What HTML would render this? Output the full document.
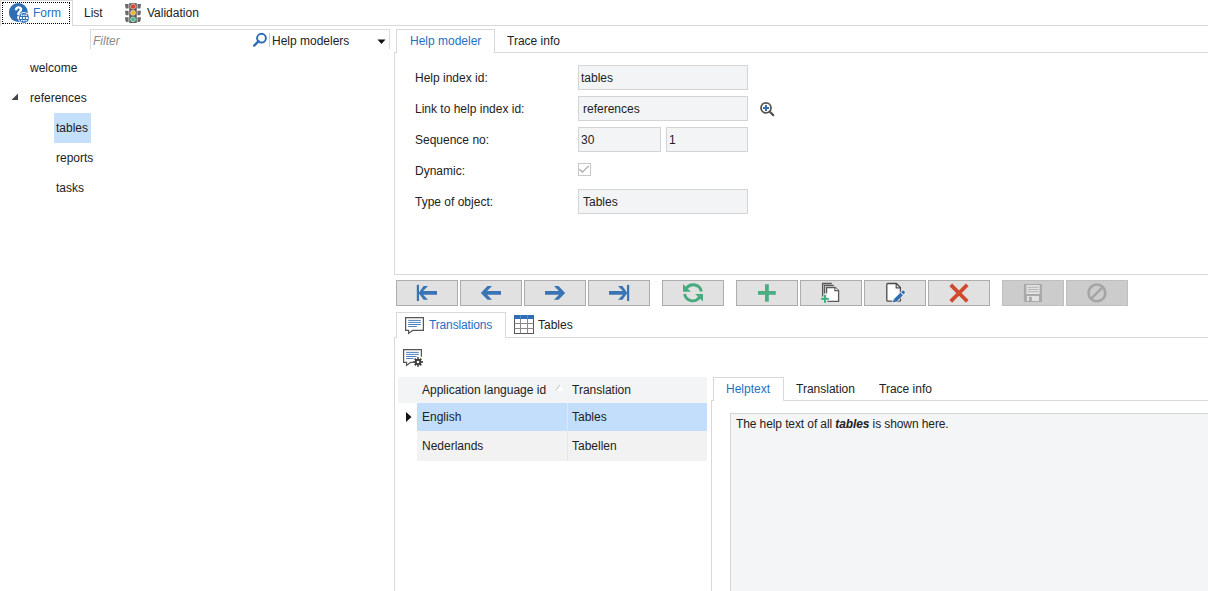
<!DOCTYPE html>
<html><head><meta charset="utf-8">
<style>
*{margin:0;padding:0;box-sizing:border-box}
html,body{width:1208px;height:591px;overflow:hidden;background:#fff;font-family:"Liberation Sans",sans-serif;font-size:12px;color:#222}
.a{position:absolute}
.t{position:absolute;white-space:nowrap;line-height:14px}
.hl{position:absolute;height:1px;background:#d9d9d9}
.vl{position:absolute;width:1px;background:#d9d9d9}
.inp{position:absolute;background:#f3f4f6;border:1px solid #d4d4d4;height:25px}
.inp span{position:absolute;left:2px;top:5px;line-height:14px}
.btn{position:absolute;top:280px;width:62px;height:26px;background:#e1e1e1;border:1px solid #adadad}
.btn.dis{background:#cccccc;border-color:#bfbfbf}
.btn svg{position:absolute;left:-1px;top:-1px}
</style></head><body>

<!-- top tab strip -->
<div class="hl" style="left:0;top:0;width:73px"></div>
<div class="vl" style="left:0;top:0;height:26px"></div>
<div class="vl" style="left:72px;top:0;height:26px"></div>
<div class="hl" style="left:72px;top:25px;width:1136px"></div>
<div class="a" style="left:2px;top:2px;width:68px;height:22px;border:1px dotted #000"></div>
<svg class="a" style="left:8px;top:2px" width="22" height="22" viewBox="0 0 22 22">
 <circle cx="10.3" cy="10.5" r="9.4" fill="#2f6db5"/>
 <path d="M6.8 8.2 C6.8 5.5 8.5 4.3 10.6 4.3 C12.8 4.3 14.3 5.6 14.3 7.6 C14.3 9.6 12.2 10.2 11.6 11.6 L11.6 13 L9.2 13 L9.2 11.4 C9.4 9.3 11.6 8.9 11.6 7.7 C11.6 6.9 11.1 6.5 10.5 6.5 C9.8 6.5 9.3 7.1 9.3 8.2 Z" fill="#fff"/>
 <rect x="9.2" y="14.3" width="2.4" height="2.4" fill="#fff"/>
 <g transform="translate(15.9 15.9)">
 <circle r="5.9" fill="#fff"/>
 <circle r="5" fill="#2f6db5"/>
 <path d="M-3.9 -1h1.9v2h-1.9zM-0.95 -1h1.9v2h-1.9zM2 -1h1.9v2h-1.9zM-2.9 -3.3h1.4v1.3h-1.4zM-0.7 -3.5h1.4v1.5h-1.4zM1.5 -3.3h1.4v1.3h-1.4zM-2.9 2h1.4v1.3h-1.4zM-0.7 2h1.4v1.5h-1.4zM1.5 2h1.4v1.3h-1.4z" fill="#fff"/>
 </g>
</svg>
<div class="t" style="left:33px;top:6px;color:#1f6fc5">Form</div>
<div class="t" style="left:84px;top:6px">List</div>
<svg class="a" style="left:124px;top:2px" width="18" height="22" viewBox="0 0 18 22">
 <rect x="5" y="1.2" width="8" height="19.8" fill="#5c5c5c"/>
 <path d="M1 2.1h3.9v4.5H2.6Q1.6 6.6 1.4 5.4zM1 8.8h3.9v4.5H2.6Q1.6 13.3 1.4 12.1zM1 15.3h3.9v4.6H2.6Q1.6 19.9 1.4 18.6z" fill="#6a6a6a"/>
 <path d="M17 2.1h-3.9v4.5h2.3Q16.4 6.6 16.6 5.4zM17 8.8h-3.9v4.5h2.3Q16.4 13.3 16.6 12.1zM17 15.3h-3.9v4.6h2.3Q16.4 19.9 16.6 18.6z" fill="#6a6a6a"/>
 <path d="M4.9 1.2v19.8M13.1 1.2v19.8" stroke="#fff" stroke-width="0.6"/>
 <circle cx="9" cy="4.5" r="2.5" fill="#e23d28" stroke="#e8e8e8" stroke-width="0.6"/>
 <circle cx="9" cy="10.8" r="2.5" fill="#f8b22e" stroke="#e8e8e8" stroke-width="0.6"/>
 <circle cx="9" cy="17.4" r="2.5" fill="#4cbf8c" stroke="#e8e8e8" stroke-width="0.6"/>
</svg>
<div class="t" style="left:147px;top:6px">Validation</div>

<!-- filter -->
<div class="hl" style="left:90px;top:29px;width:300px;background:#dcdcdc"></div>
<div class="vl" style="left:90px;top:29px;height:20px;background:#dcdcdc"></div>
<div class="vl" style="left:389px;top:29px;height:20px;background:#dcdcdc"></div>
<div class="t" style="left:93px;top:34px;color:#8a8a8a;font-style:italic">Filter</div>
<svg class="a" style="left:252px;top:32px" width="16" height="16" viewBox="0 0 16 16">
 <circle cx="9.5" cy="6.2" r="4.4" fill="none" stroke="#2f6db5" stroke-width="2"/>
 <path d="M6.6 9.2 L2.2 13.6" stroke="#2f6db5" stroke-width="2.4" stroke-linecap="round"/>
</svg>
<div class="vl" style="left:269px;top:33px;height:14px;background:#d0d0d0"></div>
<div class="t" style="left:272px;top:34px">Help modelers</div>
<svg class="a" style="left:377px;top:38.5px" width="10" height="6" viewBox="0 0 10 6"><path d="M0.5 0.5h8l-4 4.5z" fill="#111"/></svg>

<!-- tree -->
<div class="t" style="left:30px;top:61px">welcome</div>
<svg class="a" style="left:11px;top:93px" width="8" height="8" viewBox="0 0 8 8"><path d="M7 0.5V7H0.5z" fill="#444"/></svg>
<div class="t" style="left:30px;top:91px">references</div>
<div class="a" style="left:54px;top:113px;width:37px;height:30px;background:#c4e0fb"></div>
<div class="t" style="left:56px;top:121px">tables</div>
<div class="t" style="left:56px;top:151px">reports</div>
<div class="t" style="left:56px;top:181px">tasks</div>

<!-- right top panel -->
<div class="vl" style="left:394px;top:52px;height:223px"></div>
<div class="hl" style="left:394px;top:274px;width:814px"></div>
<div class="hl" style="left:396px;top:29px;width:99px"></div>
<div class="vl" style="left:396px;top:29px;height:24px"></div>
<div class="vl" style="left:494px;top:29px;height:24px"></div>
<div class="hl" style="left:394px;top:52px;width:2px"></div>
<div class="hl" style="left:494px;top:52px;width:714px"></div>
<div class="t" style="left:410px;top:34px;color:#1f6fc5">Help modeler</div>
<div class="t" style="left:507px;top:34px">Trace info</div>

<div class="t" style="left:415px;top:71px">Help index id:</div>
<div class="inp" style="left:578px;top:65px;width:170px"><span>tables</span></div>
<div class="t" style="left:415px;top:102px">Link to help index id:</div>
<div class="inp" style="left:578px;top:96px;width:170px"><span style="left:4px">references</span></div>
<svg class="a" style="left:759px;top:101px" width="16" height="16" viewBox="0 0 16 16">
 <circle cx="7" cy="6.9" r="5" fill="#fff" stroke="#555" stroke-width="1.8"/>
 <path d="M10.6 10.5 L14.2 14.1" stroke="#555" stroke-width="2.3" stroke-linecap="round"/>
 <path d="M7 4v5.9M4.05 6.9h5.9" stroke="#2f6db5" stroke-width="2"/>
</svg>
<div class="t" style="left:415px;top:133px">Sequence no:</div>
<div class="inp" style="left:578px;top:127px;width:83px"><span>30</span></div>
<div class="inp" style="left:666px;top:127px;width:82px"><span>1</span></div>
<div class="t" style="left:415px;top:164px">Dynamic:</div>
<div class="a" style="left:578px;top:163px;width:13px;height:13px;border:1px solid #c8c8c8;background:#fff"></div>
<svg class="a" style="left:578px;top:163px" width="13" height="13" viewBox="0 0 13 13"><path d="M1.4 6.2L4.3 9.2L10.8 2.9" fill="none" stroke="#a8a8a8" stroke-width="1.3"/></svg>
<div class="t" style="left:415px;top:195px">Type of object:</div>
<div class="inp" style="left:578px;top:189px;width:170px"><span style="left:4px">Tables</span></div>

<!-- toolbar -->
<div class="btn" style="left:396px"><svg width="62" height="26" viewBox="0 0 62 26"><rect x="20.8" y="4.8" width="2.2" height="16.2" fill="#3a74b5"/><path d="M22.6 12.9 L27.6 6.1 L32 6.1 L27.1 11 L41 11 L41 14.8 L27.1 14.8 L32 19.8 L27.6 19.8 Z" fill="#3a74b5"/></svg></div>
<div class="btn" style="left:460px"><svg width="62" height="26" viewBox="0 0 62 26"><path d="M20.8 12.9 L27.5 6.1 L32 6.1 L27.1 11 L41 11 L41 14.8 L27.1 14.8 L32 19.8 L27.5 19.8 Z" fill="#3a74b5"/></svg></div>
<div class="btn" style="left:524px"><svg width="62" height="26" viewBox="0 0 62 26"><path d="M41.2 12.9 L34.5 6.1 L30 6.1 L34.9 11 L21 11 L21 14.8 L34.9 14.8 L30 19.8 L34.5 19.8 Z" fill="#3a74b5"/></svg></div>
<div class="btn" style="left:588px"><svg width="62" height="26" viewBox="0 0 62 26"><rect x="39" y="4.8" width="2.2" height="16.2" fill="#3a74b5"/><path d="M39.4 12.9 L34.4 6.1 L30 6.1 L34.9 11 L21 11 L21 14.8 L34.9 14.8 L30 19.8 L34.4 19.8 Z" fill="#3a74b5"/></svg></div>
<div class="btn" style="left:662px"><svg width="62" height="26" viewBox="0 0 62 26"><path d="M24.5 8.2 A8.3 8.3 0 0 1 39.4 11.6" fill="none" stroke="#45ab7d" stroke-width="2.9"/><path d="M37.5 17.4 A8.3 8.3 0 0 1 22.6 14" fill="none" stroke="#45ab7d" stroke-width="2.9"/><path d="M21 4 L21 11.8 L28.8 11.8 Z" fill="#45ab7d"/><path d="M41 21.6 L41 13.9 L33.2 13.9 Z" fill="#45ab7d"/></svg></div>
<div class="btn" style="left:736px"><svg width="62" height="26" viewBox="0 0 62 26"><rect x="29" y="4.2" width="3.8" height="17.5" fill="#4aae83"/><rect x="22" y="11" width="17.8" height="3.8" fill="#4aae83"/></svg></div>
<div class="btn" style="left:800px"><svg width="62" height="26" viewBox="0 0 62 26"><path d="M22.6 16.6 V3.5 H31.8" fill="none" stroke="#5a5a5a" stroke-width="1.3"/><path d="M24.5 13.5 V5.4 H33.8" fill="none" stroke="#5a5a5a" stroke-width="1.3"/><path d="M26.6 13.3 V7.5 H35.1 L38.6 10.6 V21.4 H27.3" fill="#fff" stroke="#5a5a5a" stroke-width="1.3"/><path d="M34.9 7.5 V10.6 H38.6" fill="#fff" stroke="#5a5a5a" stroke-width="1.2"/><rect x="24" y="15" width="1.9" height="7.8" fill="#3fae7a"/><rect x="21.1" y="17.9" width="7.8" height="1.9" fill="#3fae7a"/></svg></div>
<div class="btn" style="left:864px"><svg width="62" height="26" viewBox="0 0 62 26"><path d="M23.8 3.5 H32.4 L36.4 7.6 V20.2 Q36.4 21.2 35.4 21.2 H23.8 Q22.8 21.2 22.8 20.2 V4.5 Q22.8 3.5 23.8 3.5 Z" fill="#fff" stroke="#4a4a4a" stroke-width="1.3"/><path d="M32.2 3.5 V7.8 H36.4" fill="none" stroke="#4a4a4a" stroke-width="1.2"/><g transform="translate(29.2 22.4) rotate(-45)"><rect x="0" y="-2.6" width="16" height="5.2" fill="#fff" opacity="0.6"/><path d="M0 0 L2.6 -1.8 L2.6 1.8 Z" fill="#2f6db5"/><rect x="2.6" y="-1.8" width="9.4" height="3.6" fill="#2f6db5"/><path d="M13 -1.8 H14 A1.8 1.8 0 0 1 14 1.8 H13 Z" fill="#2f6db5"/></g></svg></div>
<div class="btn" style="left:928px"><svg width="62" height="26" viewBox="0 0 62 26"><path d="M24.1 6.2 L37.9 20 M37.9 6.2 L24.1 20" stroke="#d04a2e" stroke-width="3.8" stroke-linecap="square"/></svg></div>
<div class="btn dis" style="left:1002px"><svg width="62" height="26" viewBox="0 0 62 26"><path d="M21.9 3.9 H40 V21.9 H22.9 L21.9 20.9 Z" fill="#a9a9a9"/><rect x="24.4" y="5" width="13.2" height="9" fill="#e2e2e2"/><path d="M25.7 7.3h10.6M25.7 9.5h10.6M25.7 11.7h10.6" stroke="#a9a9a9" stroke-width="0.8"/><rect x="24.9" y="16" width="12.1" height="5" fill="#e2e2e2"/><rect x="27" y="16.8" width="2.8" height="4.2" fill="#a9a9a9"/></svg></div>
<div class="btn dis" style="left:1066px"><svg width="62" height="26" viewBox="0 0 62 26"><circle cx="30.9" cy="12.9" r="8.4" fill="none" stroke="#a5a5a5" stroke-width="2.6"/><path d="M25.4 18.4 L36.4 7.4" stroke="#a5a5a5" stroke-width="2.6"/></svg></div>

<!-- bottom tabs -->
<div class="hl" style="left:396px;top:312px;width:110px"></div>
<div class="vl" style="left:396px;top:312px;height:26px"></div>
<div class="vl" style="left:505px;top:312px;height:26px"></div>
<div class="hl" style="left:505px;top:337px;width:703px"></div>
<div class="vl" style="left:394px;top:337px;height:254px"></div>
<div class="hl" style="left:394px;top:337px;width:2px"></div>
<svg class="a" style="left:400px;top:312px" width="30" height="26" viewBox="400 312 30 26">
 <path d="M405.6 317.6 H423.4 V330.4 H412.6 L408.6 333.4 V330.4 H405.6 Z" fill="#fff" stroke="#555" stroke-width="1.2" stroke-linejoin="miter"/>
 <path d="M408.2 320.4h12.7M408.2 322.4h12.7M408.2 324.5h12.7M408.2 326.5h8.6" stroke="#2f6db5" stroke-width="0.85"/>
</svg>
<svg class="a" style="left:510px;top:312px" width="28" height="26" viewBox="510 312 28 26">
 <rect x="514.5" y="315.5" width="19" height="18" fill="#fff" stroke="#555" stroke-width="1"/>
 <path d="M520.5 318v15.5M527.5 318v15.5M514.5 323.5h19M514.5 328.5h19" stroke="#8a8a8a" stroke-width="1"/>
 <rect x="514" y="315" width="20" height="4" fill="#2f6db5"/>
 <path d="M520.5 315.5v3M527.5 315.5v3" stroke="#6f98cf" stroke-width="0.8"/>
</svg>
<svg class="a" style="left:400px;top:345px" width="28" height="24" viewBox="400 345 28 24">
 <path d="M421.4 356.7 V349.6 H403.6 V362.4 H406.6 V365.4 L410.6 362.4 H413" fill="none" stroke="#555" stroke-width="1.2"/>
 <path d="M406.1 352.4h12.7M406.1 354.4h12.7M406.1 356.5h10.4M406.1 358.5h7.4" stroke="#2f6db5" stroke-width="0.85"/>
 <g transform="translate(418 362)">
  <circle r="4.7" fill="#fff"/>
  <path d="M-0.9 -4.8h1.8v1.6h-1.8zM-0.9 3.2h1.8v1.6h-1.8zM-4.8 -0.9v1.8h1.6v-1.8zM3.2 -0.9v1.8h1.6v-1.8z" fill="#3c3c3c"/>
  <g transform="rotate(45)"><path d="M-0.9 -4.6h1.8v1.6h-1.8zM-0.9 3h1.8v1.6h-1.8zM-4.6 -0.9v1.8h1.6v-1.8zM3 -0.9v1.8h1.6v-1.8z" fill="#3c3c3c"/></g>
  <circle r="2.3" fill="none" stroke="#3c3c3c" stroke-width="2"/>
 </g>
</svg>
<div class="t" style="left:429px;top:318px;color:#1f6fc5;letter-spacing:-0.15px">Translations</div>
<div class="t" style="left:538px;top:318px">Tables</div>

<!-- grid -->
<div class="a" style="left:398px;top:377px;width:309px;height:26px;background:#f3f4f6"></div>
<div class="t" style="left:422px;top:383px">Application language id</div>
<svg class="a" style="left:554px;top:383px" width="12" height="10" viewBox="554 383 12 10"><path d="M559.7 385 L564 390.8 H555.8 Z" fill="#fff"/><path d="M559.5 385.2 L556 390.6" stroke="#8a8a8a" stroke-width="0.9" stroke-dasharray="1.2 0.8"/></svg>
<div class="t" style="left:572px;top:383px">Translation</div>
<div class="a" style="left:417px;top:403px;width:290px;height:28px;background:#c2defa"></div>
<div class="a" style="left:417px;top:431px;width:290px;height:30px;background:#f2f2f2"></div>
<div class="vl" style="left:567px;top:403px;height:58px;background:#e6e6e6"></div>
<div class="t" style="left:422px;top:410px">English</div>
<div class="t" style="left:572px;top:410px">Tables</div>
<div class="t" style="left:422px;top:439px">Nederlands</div>
<div class="t" style="left:572px;top:439px">Tabellen</div>
<svg class="a" style="left:405px;top:411px" width="8" height="12" viewBox="0 0 8 12"><path d="M1 1l5.5 5L1 11z" fill="#111"/></svg>

<!-- help text panel -->
<div class="hl" style="left:713px;top:377px;width:71px"></div>
<div class="vl" style="left:713px;top:377px;height:24px"></div>
<div class="vl" style="left:783px;top:377px;height:24px"></div>
<div class="hl" style="left:711px;top:400px;width:2px"></div>
<div class="hl" style="left:783px;top:400px;width:425px"></div>
<div class="vl" style="left:711px;top:400px;height:191px"></div>
<div class="t" style="left:726px;top:382px;color:#1f6fc5">Helptext</div>
<div class="t" style="left:796px;top:382px">Translation</div>
<div class="t" style="left:879px;top:382px">Trace info</div>
<div class="a" style="left:730px;top:413px;width:478px;height:178px;background:#f4f5f7;border:1px solid #d4d4d4;border-right:0;border-bottom:0"></div>
<div class="t" style="left:736px;top:417px;letter-spacing:-0.1px">The help text of all <b><i>tables</i></b> is shown here.</div>

</body></html>
